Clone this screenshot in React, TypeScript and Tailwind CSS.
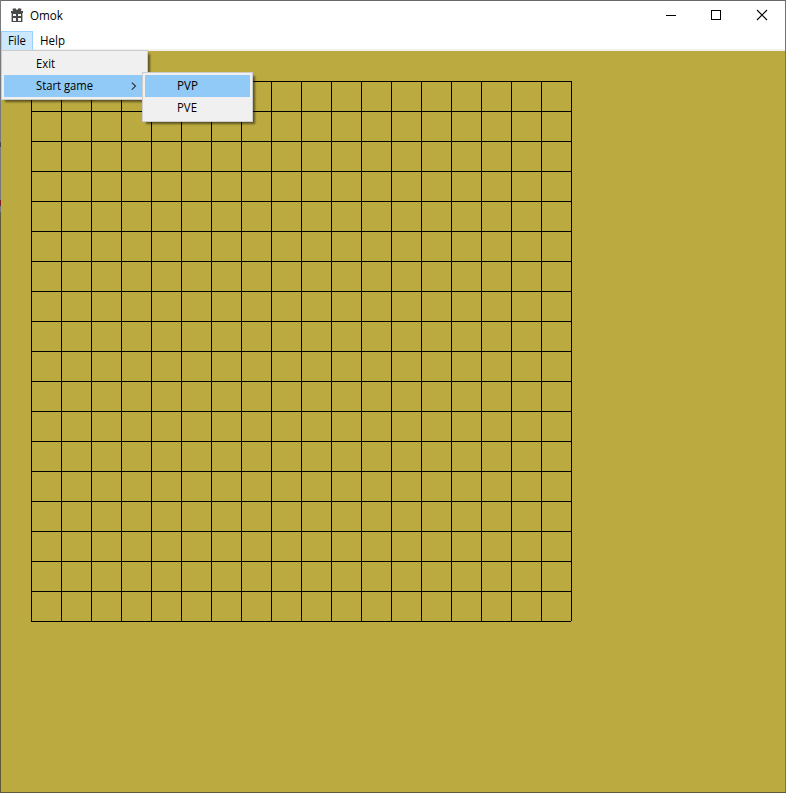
import React from "react";

const LINES = Array.from({ length: 19 }, (_, i) => i * 30 + 0.5);

function AppIcon() {
  return (
    <svg width="12" height="14" viewBox="0 0 12 14" className="block" fill="#484848">
      <path d="M0 3h12v2H0z M.6 5h10.8v9H.6z" />
      <path d="M1.4 .8L4.4 .3 6 2.2 7.6 .3 10.6 .8 9.8 3.4H2.2z" />
      <path d="M2 6h3v2H2z M7 6h3v2H7z M2 10h3v3H2z M7 10h3v3H7z" fill="#f4f4f4" />
    </svg>
  );
}

function Board() {
  return (
    <svg width="541" height="541" className="block" stroke="#000" shapeRendering="crispEdges">
      {LINES.map((p, i) => (
        <React.Fragment key={i}>
          <path d={`M${p} 0V${i === 18 ? 540 : 541}`} />
          <path d={`M0 ${p}H540`} />
        </React.Fragment>
      ))}
    </svg>
  );
}

function Label({ children, width }: { children: string; width: number }) {
  return (
    <svg width={width + 2} height="22" className="block shrink-0 overflow-visible">
      <text x="0" y="15" textLength={width} lengthAdjust="spacingAndGlyphs" fill="#000">{children}</text>
    </svg>
  );
}

export default function App() {
  return (
    <div className="relative flex h-[793px] w-[786px] flex-col overflow-hidden bg-[#bbaa40] font-['Open_Sans','Noto_Sans',sans-serif] text-[12px] text-black select-none">
      <header className="flex h-[30px] shrink-0 border-t border-[#69696b] bg-white pl-[11px]">
        <div className="flex flex-1 pt-[7px]">
          <AppIcon />
          <div className="-mt-[3px] ml-[7px]"><Label width={33}>Omok</Label></div>
        </div>
        <svg width="120" height="29" className="block" fill="none" stroke="#000">
          <path d="M0 14.5h10M45.5 9.5h9v9h-9z" shapeRendering="crispEdges" />
          <path d="M91 9l10 10M101 9L91 19" strokeWidth="1.1" />
        </svg>
      </header>
      <nav className="flex h-[21px] shrink-0 border-b-2 border-[#f0f0f0] bg-white pl-px">
        <div className="mt-px h-[20px] w-8 border border-[#99d1ff] bg-[#cce8ff] pl-[6px]"><div className="-mt-[2px]"><Label width={18}>File</Label></div></div>
        <div className="pl-[7px]"><Label width={25}>Help</Label></div>
      </nav>
      <main className="pt-[30px] pl-[31px]"><Board /></main>

      <div className="absolute top-[50px] left-px h-[50px] w-[147px] border border-[#ccc] bg-[#f0f0f0] p-[2px] shadow-[3px_3px_2px_-1px_rgba(0,0,0,0.5)]">
        <div className="h-[22px] pl-8"><Label width={19}>Exit</Label></div>
        <div className="flex h-[22px] bg-[#91c9f7] pl-8">
          <Label width={57}>Start game</Label>
          <svg width="6" height="9" className="mt-[7px] ml-[36px] block" fill="none" stroke="#333" strokeWidth="1.2"><path d="M.8 .6l3.7 3.5-3.7 3.5" /></svg>
        </div>
      </div>
      <div className="absolute top-[72px] left-[142px] h-[50px] w-[111px] border border-[#ccc] bg-[#f0f0f0] p-[2px] shadow-[3px_3px_2px_-1px_rgba(0,0,0,0.5)]">
        <div className="h-[22px] bg-[#91c9f7] pl-8"><Label width={21}>PVP</Label></div>
        <div className="h-[22px] pl-8"><Label width={20}>PVE</Label></div>
      </div>
      <div className="absolute top-0 left-0 h-full w-px bg-[#5f5a35]">
        <div className="h-[142px] bg-[#77797c]" />
        <div className="h-[5px] bg-[#484848]" />
        <div className="h-[53px] bg-[#77797c]" />
        <div className="h-[6px] bg-[#7d1c22]" />
        <div className="h-[6px] bg-[#77797c]" />
      </div>
      <div className="absolute top-0 right-0 h-full w-px bg-[#77745c]" />
      <div className="absolute bottom-0 left-0 h-px w-full bg-[#5f5a35]" />
    </div>
  );
}
